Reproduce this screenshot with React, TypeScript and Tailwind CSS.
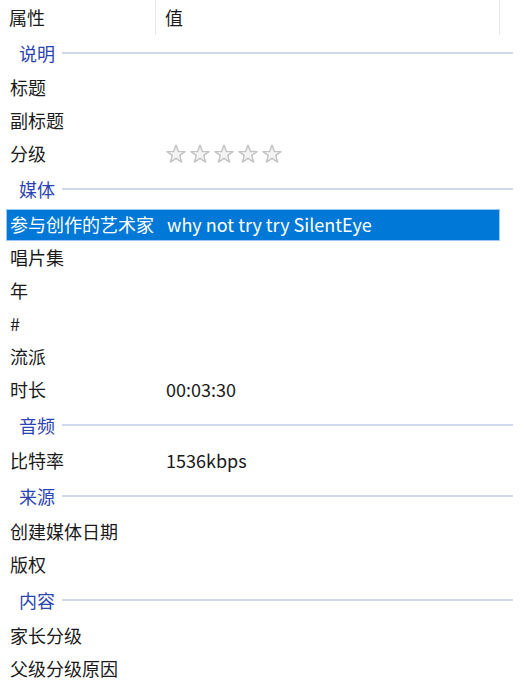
const font = { fontFamily: '"Noto Sans CJK SC", "Noto Sans", sans-serif' };

type Row =
  | { kind: "section"; label: string; first?: boolean }
  | { kind: "item"; label: string; value?: string; stars?: boolean; selected?: boolean };

const rows: Row[] = [
  { kind: "section", label: "说明", first: true },
  { kind: "item", label: "标题" },
  { kind: "item", label: "副标题" },
  { kind: "item", label: "分级", stars: true },
  { kind: "section", label: "媒体" },
  { kind: "item", label: "参与创作的艺术家", value: "why not try try SilentEye", selected: true },
  { kind: "item", label: "唱片集" },
  { kind: "item", label: "年" },
  { kind: "item", label: "#" },
  { kind: "item", label: "流派" },
  { kind: "item", label: "时长", value: "00:03:30" },
  { kind: "section", label: "音频" },
  { kind: "item", label: "比特率", value: "1536kbps" },
  { kind: "section", label: "来源" },
  { kind: "item", label: "创建媒体日期" },
  { kind: "item", label: "版权" },
  { kind: "section", label: "内容" },
  { kind: "item", label: "家长分级" },
  { kind: "item", label: "父级分级原因" },
];

function Star() {
  return (
    <svg width="22" height="22" viewBox="0 0 24 24" className="shrink-0">
      <polygon
        points="12,2.5 14.6,9.2 21.8,9.4 16.1,13.8 18.1,20.8 12,16.7 5.9,20.8 7.9,13.8 2.2,9.4 9.4,9.2"
        fill="#f4f4f4"
        stroke="#c4c4c4"
        strokeWidth="1.6"
        strokeLinejoin="round"
      />
    </svg>
  );
}

export default function App() {
  return (
    <div className="w-[525px] h-[696px] bg-white text-[18px] text-[#1a1a1a] overflow-hidden" style={font}>
      {/* header */}
      <div className="flex h-[35px] items-center">
        <div className="w-[155px] pl-[9px]">属性</div>
        <div className="h-full w-px bg-[#e6e6e6]" />
        <div className="w-[343px] pl-[9px]">值</div>
        <div className="h-full w-px bg-[#e6e6e6]" />
      </div>

      {rows.map((r, i) =>
        r.kind === "section" ? (
          <div key={i} className={`flex items-center ${r.first ? "h-[36px]" : "h-[38px]"}`}>
            <span className="pl-[19px] pr-[7px] text-[#2b44b3]">{r.label}</span>
            <div className="h-[2px] w-[451px] bg-[#cfd8ec]" />
          </div>
        ) : (
          <div key={i} className="flex h-[33px] items-center">
            <div
              className={`ml-[6px] flex h-[32px] w-[494px] items-center ${
                r.selected ? "border border-[#9cc8f2] bg-[#0078d7] text-white" : ""
              }`}
            >
              <div className={`w-[154px] whitespace-nowrap ${r.selected ? "pl-[3px]" : "pl-[4px]"}`}>{r.label}</div>
              {r.stars ? (
                <div className="flex gap-[2px] pl-[5px]">
                  <Star />
                  <Star />
                  <Star />
                  <Star />
                  <Star />
                </div>
              ) : (
                <div className="pl-[6px] whitespace-nowrap">{r.value}</div>
              )}
            </div>
          </div>
        )
      )}
    </div>
  );
}
